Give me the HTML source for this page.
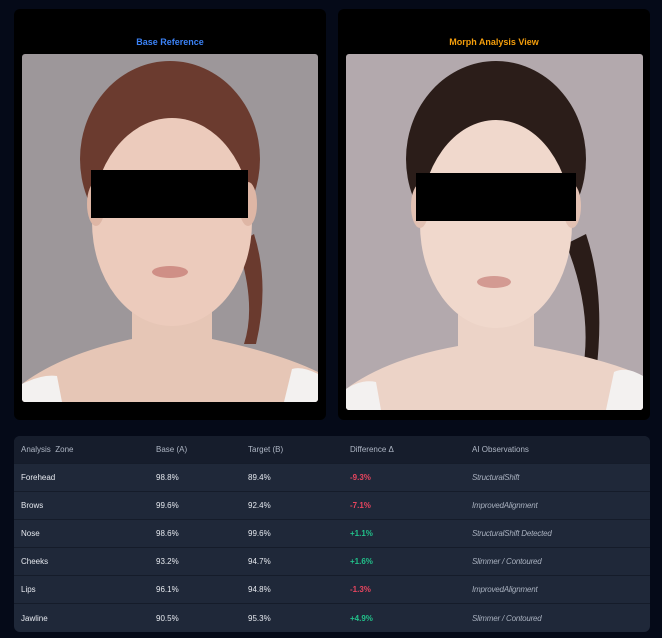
<!DOCTYPE html>
<html><head><meta charset="utf-8"><style>
*{margin:0;padding:0;box-sizing:border-box}
body{width:662px;height:638px;background:#050a18;font-family:"Liberation Sans",sans-serif;position:relative;overflow:hidden}
.panel{position:absolute;top:9px;background:#000;border-radius:6px}
.title{position:absolute;top:28px;width:100%;text-align:center;font-size:9px;font-weight:bold}
.photo{position:absolute;border-radius:3px;overflow:hidden}
.bar{position:absolute;background:#000}
table{position:absolute;left:14px;top:436px;width:636px;border-collapse:collapse;background:#1f2839;border-radius:6px;overflow:hidden;font-size:8px;color:#e6e9ef}
th{background:#161d2c;color:#aeb6c4;font-weight:normal;text-align:left;height:27px;padding-left:7px}
td{height:28.2px;padding-left:7px;border-top:1px solid #151c2a}
.neg{color:#e8455f;font-weight:bold}.pos{color:#22c08a;font-weight:bold}
.obs{color:#a8b0be;font-style:italic;letter-spacing:-0.2px}
</style></head><body>
<div class="panel" style="left:14px;width:312px;height:411px">
<div class="title" style="color:#3b82f6">Base Reference</div>
<div class="photo" style="left:8px;top:45px;width:296px;height:348px">
<svg width="296" height="348" viewBox="0 0 296 348">
<rect width="296" height="348" fill="#9d979a"/>
<path d="M215 190 Q235 250 222 290 L234 290 Q248 230 232 180Z" fill="#6a3a2e"/>
<ellipse cx="148" cy="105" rx="90" ry="98" fill="#6b3b2f"/>
<path d="M0 348 L0 330 Q40 300 110 285 L110 230 L190 230 L190 285 Q260 300 296 318 L296 348Z" fill="#e6c6b6"/>
<ellipse cx="150" cy="168" rx="80" ry="104" fill="#eccbbc"/>
<ellipse cx="74" cy="150" rx="9" ry="22" fill="#deb6a5"/>
<ellipse cx="226" cy="150" rx="9" ry="22" fill="#deb6a5"/>
<ellipse cx="148" cy="218" rx="18" ry="6" fill="#cf8f86"/>
<path d="M0 348 L0 330 Q20 320 35 322 L40 348Z" fill="#f3f1f0"/>
<path d="M296 348 L296 320 Q280 312 270 315 L262 348Z" fill="#f3f1f0"/>
</svg>
<div class="bar" style="left:69px;top:116px;width:157px;height:48px"></div>
</div>
</div>
<div class="panel" style="left:338px;width:312px;height:411px">
<div class="title" style="color:#f59e0b">Morph Analysis View</div>
<div class="photo" style="left:8px;top:45px;width:297px;height:356px">
<svg width="297" height="356" viewBox="0 0 297 356">
<rect width="297" height="356" fill="#b3a9ad"/>
<path d="M220 190 Q248 260 236 320 L250 320 Q260 240 240 180Z" fill="#2a1c18"/>
<ellipse cx="150" cy="105" rx="90" ry="98" fill="#2b1d19"/>
<path d="M0 356 L0 335 Q40 305 112 292 L112 235 L188 235 L188 292 Q260 305 297 322 L297 356Z" fill="#ecd3c7"/>
<ellipse cx="150" cy="170" rx="76" ry="104" fill="#f0d8cc"/>
<ellipse cx="74" cy="152" rx="9" ry="22" fill="#e2c1b3"/>
<ellipse cx="226" cy="152" rx="9" ry="22" fill="#e2c1b3"/>
<ellipse cx="148" cy="228" rx="17" ry="6" fill="#d39a92"/>
<path d="M0 356 L0 335 Q15 325 30 328 L35 356Z" fill="#f3f1f0"/>
<path d="M297 356 L297 322 Q280 312 268 318 L260 356Z" fill="#f3f1f0"/>
</svg>
<div class="bar" style="left:70px;top:119px;width:160px;height:48px"></div>
</div>
</div>
<table>
<tr><th style="width:135px">Analysis&nbsp; Zone</th><th style="width:92px">Base (A)</th><th style="width:102px">Target (B)</th><th style="width:122px">Difference Δ</th><th>AI Observations</th></tr>
<tr><td>Forehead</td><td>98.8%</td><td>89.4%</td><td class="neg">-9.3%</td><td class="obs">StructuralShift</td></tr>
<tr><td>Brows</td><td>99.6%</td><td>92.4%</td><td class="neg">-7.1%</td><td class="obs">ImprovedAlignment</td></tr>
<tr><td>Nose</td><td>98.6%</td><td>99.6%</td><td class="pos">+1.1%</td><td class="obs">StructuralShift Detected</td></tr>
<tr><td>Cheeks</td><td>93.2%</td><td>94.7%</td><td class="pos">+1.6%</td><td class="obs">Slimmer / Contoured</td></tr>
<tr><td>Lips</td><td>96.1%</td><td>94.8%</td><td class="neg">-1.3%</td><td class="obs">ImprovedAlignment</td></tr>
<tr><td>Jawline</td><td>90.5%</td><td>95.3%</td><td class="pos">+4.9%</td><td class="obs">Slimmer / Contoured</td></tr>
</table>
</body></html>
